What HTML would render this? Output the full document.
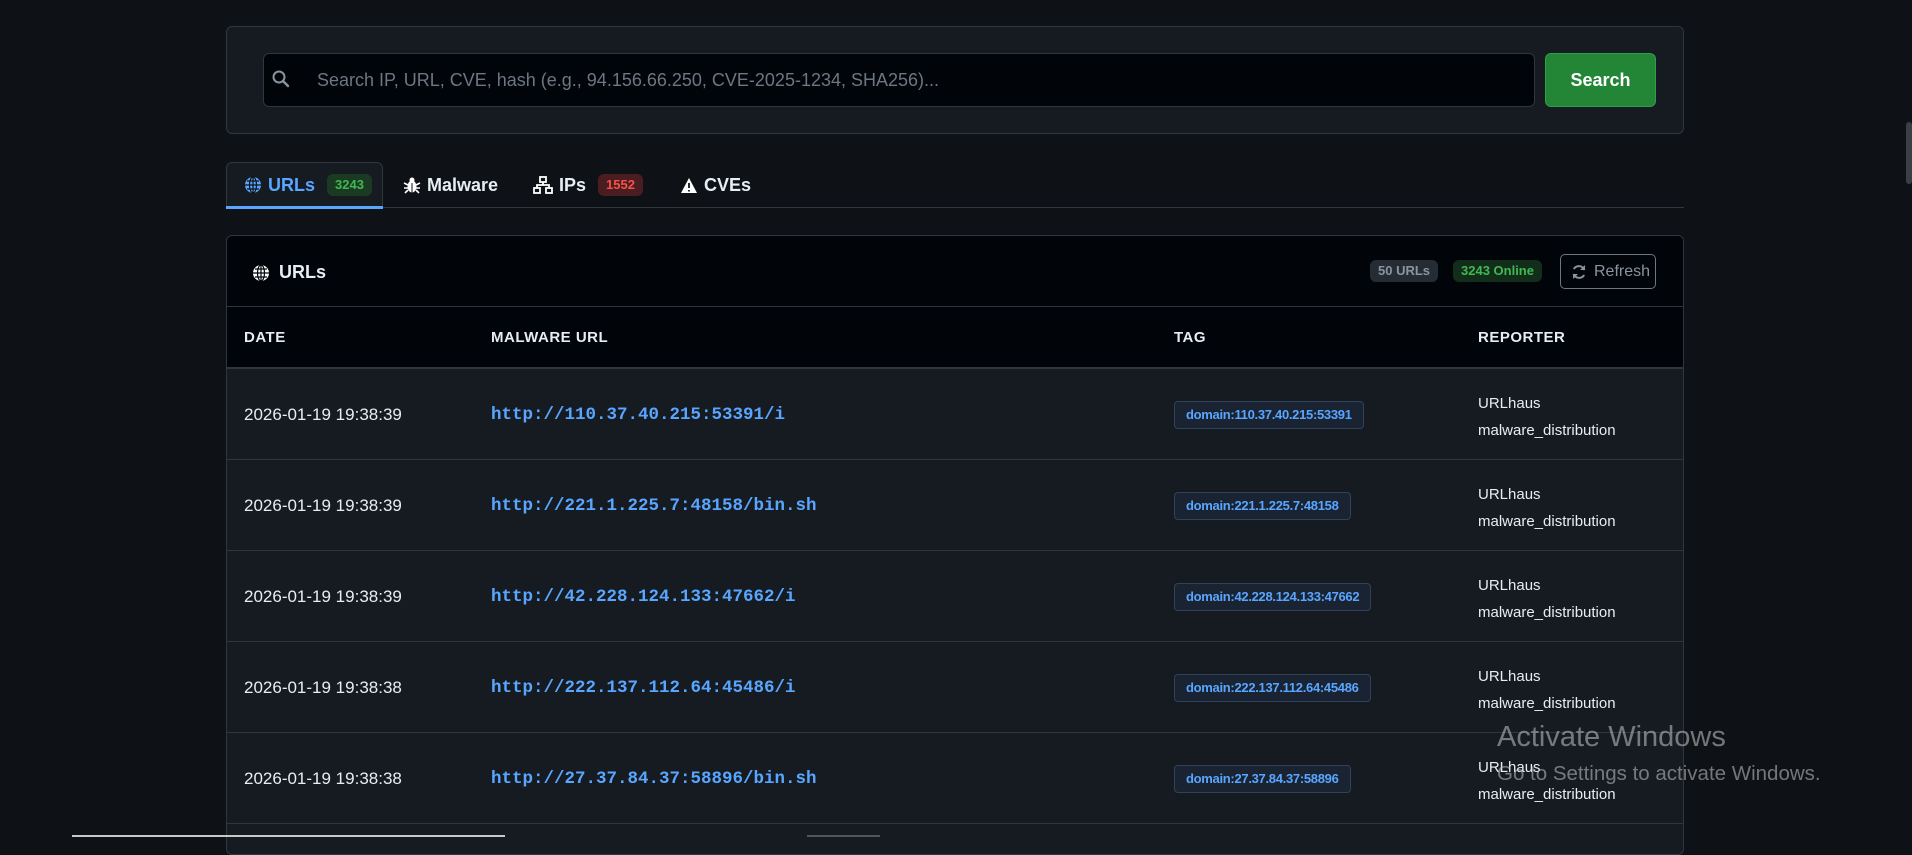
<!DOCTYPE html>
<html><head><meta charset="utf-8"><style>
*{box-sizing:border-box;margin:0;padding:0}
html,body{width:1912px;height:837px;overflow:hidden;background:#0e1217;font-family:"Liberation Sans",sans-serif;color:#e6edf3}
.abs{position:absolute}
.panel{left:226px;top:26px;width:1458px;height:108px;background:#161b22;border:1px solid #30363d;border-radius:6px}
.input{left:263px;top:53px;width:1272px;height:54px;background:#010409;border:1px solid #30363d;border-radius:6px;color:#6e7681;font-size:18px;line-height:52px;padding-left:53px}
.btn{left:1545px;top:53px;width:111px;height:54px;background:#238636;border:1px solid #2ea043;border-radius:6px;color:#fff;font-weight:bold;font-size:18px;text-align:center;line-height:52px}
.tabline{left:226px;top:207px;width:1458px;height:1px;background:#30363d}
.tab{top:162px;height:46px;font-size:18px;font-weight:bold;line-height:46px;display:flex;align-items:center;gap:6px}
.badge{font-size:13px;font-weight:bold;padding:3px 8px;border-radius:6px;line-height:16px}
.card{left:226px;top:235px;width:1458px;height:620px;background:#161b22;border:1px solid #30363d;border-radius:6px;overflow:hidden}
.chead{position:absolute;left:0;top:0;width:100%;height:71px;background:#010409;border-bottom:1px solid #30363d}
.thead{position:absolute;left:0;top:71px;width:100%;height:62px;background:#010409;border-bottom:2px solid #30363d;font-size:15px;font-weight:bold;letter-spacing:.5px}
.row{position:absolute;left:0;width:100%;height:91px;border-bottom:1px solid #30363d;font-size:17px}
.c1{position:absolute;left:17px}
.c2{position:absolute;left:264px;font-family:"Liberation Mono",monospace;color:#58a6ff;font-weight:bold;font-size:17.5px}
.c3{position:absolute;left:947px}
.c4{position:absolute;left:1251px}
.tag{display:inline-block;background:#1a2332;border:1px solid #30415a;border-radius:4px;color:#58a6ff;font-weight:bold;font-size:13px;padding:0 11px;height:28px;line-height:26px;letter-spacing:-.3px}
</style></head><body>
<div class="abs panel"></div>
<div class="abs input">Search IP, URL, CVE, hash (e.g., 94.156.66.250, CVE-2025-1234, SHA256)...</div>
<svg class="abs" style="left:271px;top:69px" width="20" height="20" viewBox="0 0 20 20"><circle cx="8" cy="8" r="5.5" fill="none" stroke="#8b949e" stroke-width="2"/><path d="M12 12l5 5" stroke="#8b949e" stroke-width="2.4" stroke-linecap="round"/></svg>
<div class="abs btn">Search</div>

<div class="abs" style="left:226px;top:162px;width:157px;height:46px;background:#161b22;border:1px solid #30363d;border-bottom:none;border-radius:6px 6px 0 0"></div>
<div class="abs tabline"></div>
<div class="abs" style="left:226px;top:206px;width:157px;height:3px;background:#58a6ff"></div>
<div class="abs tab" style="left:244px;color:#58a6ff"><svg width="18" height="18" viewBox="0 0 18 18"><circle cx="9" cy="9" r="8" fill="#58a6ff"/><path d="M1 9h16M9 1v16M3 5h12M3 13h12" stroke="#0e1217" stroke-width="1.2"/><ellipse cx="9" cy="9" rx="3.5" ry="8" fill="none" stroke="#0e1217" stroke-width="1.2"/></svg>URLs<span class="badge" style="background:#1a3a24;color:#3fb950;margin-left:6px">3243</span></div>
<div class="abs tab" style="left:403px"><svg width="18" height="18" viewBox="0 0 18 18"><ellipse cx="9" cy="10.5" rx="4.5" ry="6" fill="#fff"/><circle cx="9" cy="4" r="2.5" fill="#fff"/><path d="M1 7l4 2M17 7l-4 2M1 12h4M17 12h-4M2 17l3-3M16 17l-3-3" stroke="#fff" stroke-width="1.6"/><path d="M9 7v10" stroke="#0e1217" stroke-width="1"/></svg>Malware</div>
<div class="abs tab" style="left:533px"><svg width="20" height="18" viewBox="0 0 20 18"><rect x="7" y="1" width="6" height="5" fill="none" stroke="#fff" stroke-width="1.8"/><rect x="1" y="12" width="6" height="5" fill="none" stroke="#fff" stroke-width="1.8"/><rect x="13" y="12" width="6" height="5" fill="none" stroke="#fff" stroke-width="1.8"/><path d="M10 6v3M4 12V9h12v3" stroke="#fff" stroke-width="1.8" fill="none"/></svg>IPs<span class="badge" style="background:#4a1e20;color:#f85149;margin-left:6px">1552</span></div>
<div class="abs tab" style="left:680px"><svg width="18" height="17" viewBox="0 0 18 17"><path d="M9 1L17 16H1z" fill="#fff"/><path d="M9 6v5M9 13v1.5" stroke="#0e1217" stroke-width="1.8"/></svg>CVEs</div>

<div class="abs card">
 <div class="chead">
  <div style="position:absolute;left:25px;top:26px;display:flex;align-items:center;gap:9px;font-size:18px;font-weight:bold"><svg width="18" height="18" viewBox="0 0 18 18"><circle cx="9" cy="9" r="8" fill="#fff"/><path d="M1 9h16M9 1v16M3 5h12M3 13h12" stroke="#010409" stroke-width="1.2"/><ellipse cx="9" cy="9" rx="3.5" ry="8" fill="none" stroke="#010409" stroke-width="1.2"/></svg>URLs</div>
  <span class="badge" style="position:absolute;left:1143px;top:24px;background:#262c34;color:#8b949e">50 URLs</span>
  <span class="badge" style="position:absolute;left:1226px;top:24px;background:#132d1b;color:#3fb950">3243 Online</span>
  <div style="position:absolute;left:1333px;top:18px;width:96px;height:35px;border:1px solid #6e7681;border-radius:5px;color:#8b949e;font-size:16px;line-height:33px;padding-left:33px;white-space:nowrap">Refresh</div>
  <svg style="position:absolute;left:1344px;top:28px" width="16" height="16" viewBox="0 0 16 16"><path d="M13.5 6A6 6 0 0 0 2.8 5M2.5 10a6 6 0 0 0 10.7 1" fill="none" stroke="#8b949e" stroke-width="2"/><path d="M14 1v5h-5zM2 15v-5h5z" fill="#8b949e"/></svg>
 </div>
 <div class="thead"><span class="c1" style="top:22px">DATE</span><span class="c2" style="top:22px;font-family:'Liberation Sans',sans-serif;color:#e6edf3;font-size:15px">MALWARE URL</span><span class="c3" style="top:22px">TAG</span><span class="c4" style="top:22px">REPORTER</span></div>
 <div class="row" style="top:133px"><span class="c1" style="top:36px">2026-01-19 19:38:39</span><span class="c2" style="top:36px">http://110.37.40.215:53391/i</span><span class="c3" style="top:32px"><span class="tag">domain:110.37.40.215:53391</span></span><span class="c4" style="top:21px;font-size:15px;line-height:27px">URLhaus<br>malware_distribution</span></div>
 <div class="row" style="top:224px"><span class="c1" style="top:36px">2026-01-19 19:38:39</span><span class="c2" style="top:36px">http://221.1.225.7:48158/bin.sh</span><span class="c3" style="top:32px"><span class="tag">domain:221.1.225.7:48158</span></span><span class="c4" style="top:21px;font-size:15px;line-height:27px">URLhaus<br>malware_distribution</span></div>
 <div class="row" style="top:315px"><span class="c1" style="top:36px">2026-01-19 19:38:39</span><span class="c2" style="top:36px">http://42.228.124.133:47662/i</span><span class="c3" style="top:32px"><span class="tag">domain:42.228.124.133:47662</span></span><span class="c4" style="top:21px;font-size:15px;line-height:27px">URLhaus<br>malware_distribution</span></div>
 <div class="row" style="top:406px"><span class="c1" style="top:36px">2026-01-19 19:38:38</span><span class="c2" style="top:36px">http://222.137.112.64:45486/i</span><span class="c3" style="top:32px"><span class="tag">domain:222.137.112.64:45486</span></span><span class="c4" style="top:21px;font-size:15px;line-height:27px">URLhaus<br>malware_distribution</span></div>
 <div class="row" style="top:497px"><span class="c1" style="top:36px">2026-01-19 19:38:38</span><span class="c2" style="top:36px">http://27.37.84.37:58896/bin.sh</span><span class="c3" style="top:32px"><span class="tag">domain:27.37.84.37:58896</span></span><span class="c4" style="top:21px;font-size:15px;line-height:27px">URLhaus<br>malware_distribution</span></div>
</div>

<div class="abs" style="left:1497px;top:721px;color:rgba(200,200,200,.55);font-size:29px">Activate Windows</div>
<div class="abs" style="left:1497px;top:762px;color:rgba(200,200,200,.55);font-size:20.5px">Go to Settings to activate Windows.</div>
<div class="abs" style="left:1906px;top:122px;width:6px;height:62px;background:#3a3f45;border-radius:3px"></div>
<div class="abs" style="left:72px;top:835px;width:433px;height:2px;background:#c8c8c8"></div>
<div class="abs" style="left:807px;top:835px;width:73px;height:2px;background:#555"></div>
</body></html>
